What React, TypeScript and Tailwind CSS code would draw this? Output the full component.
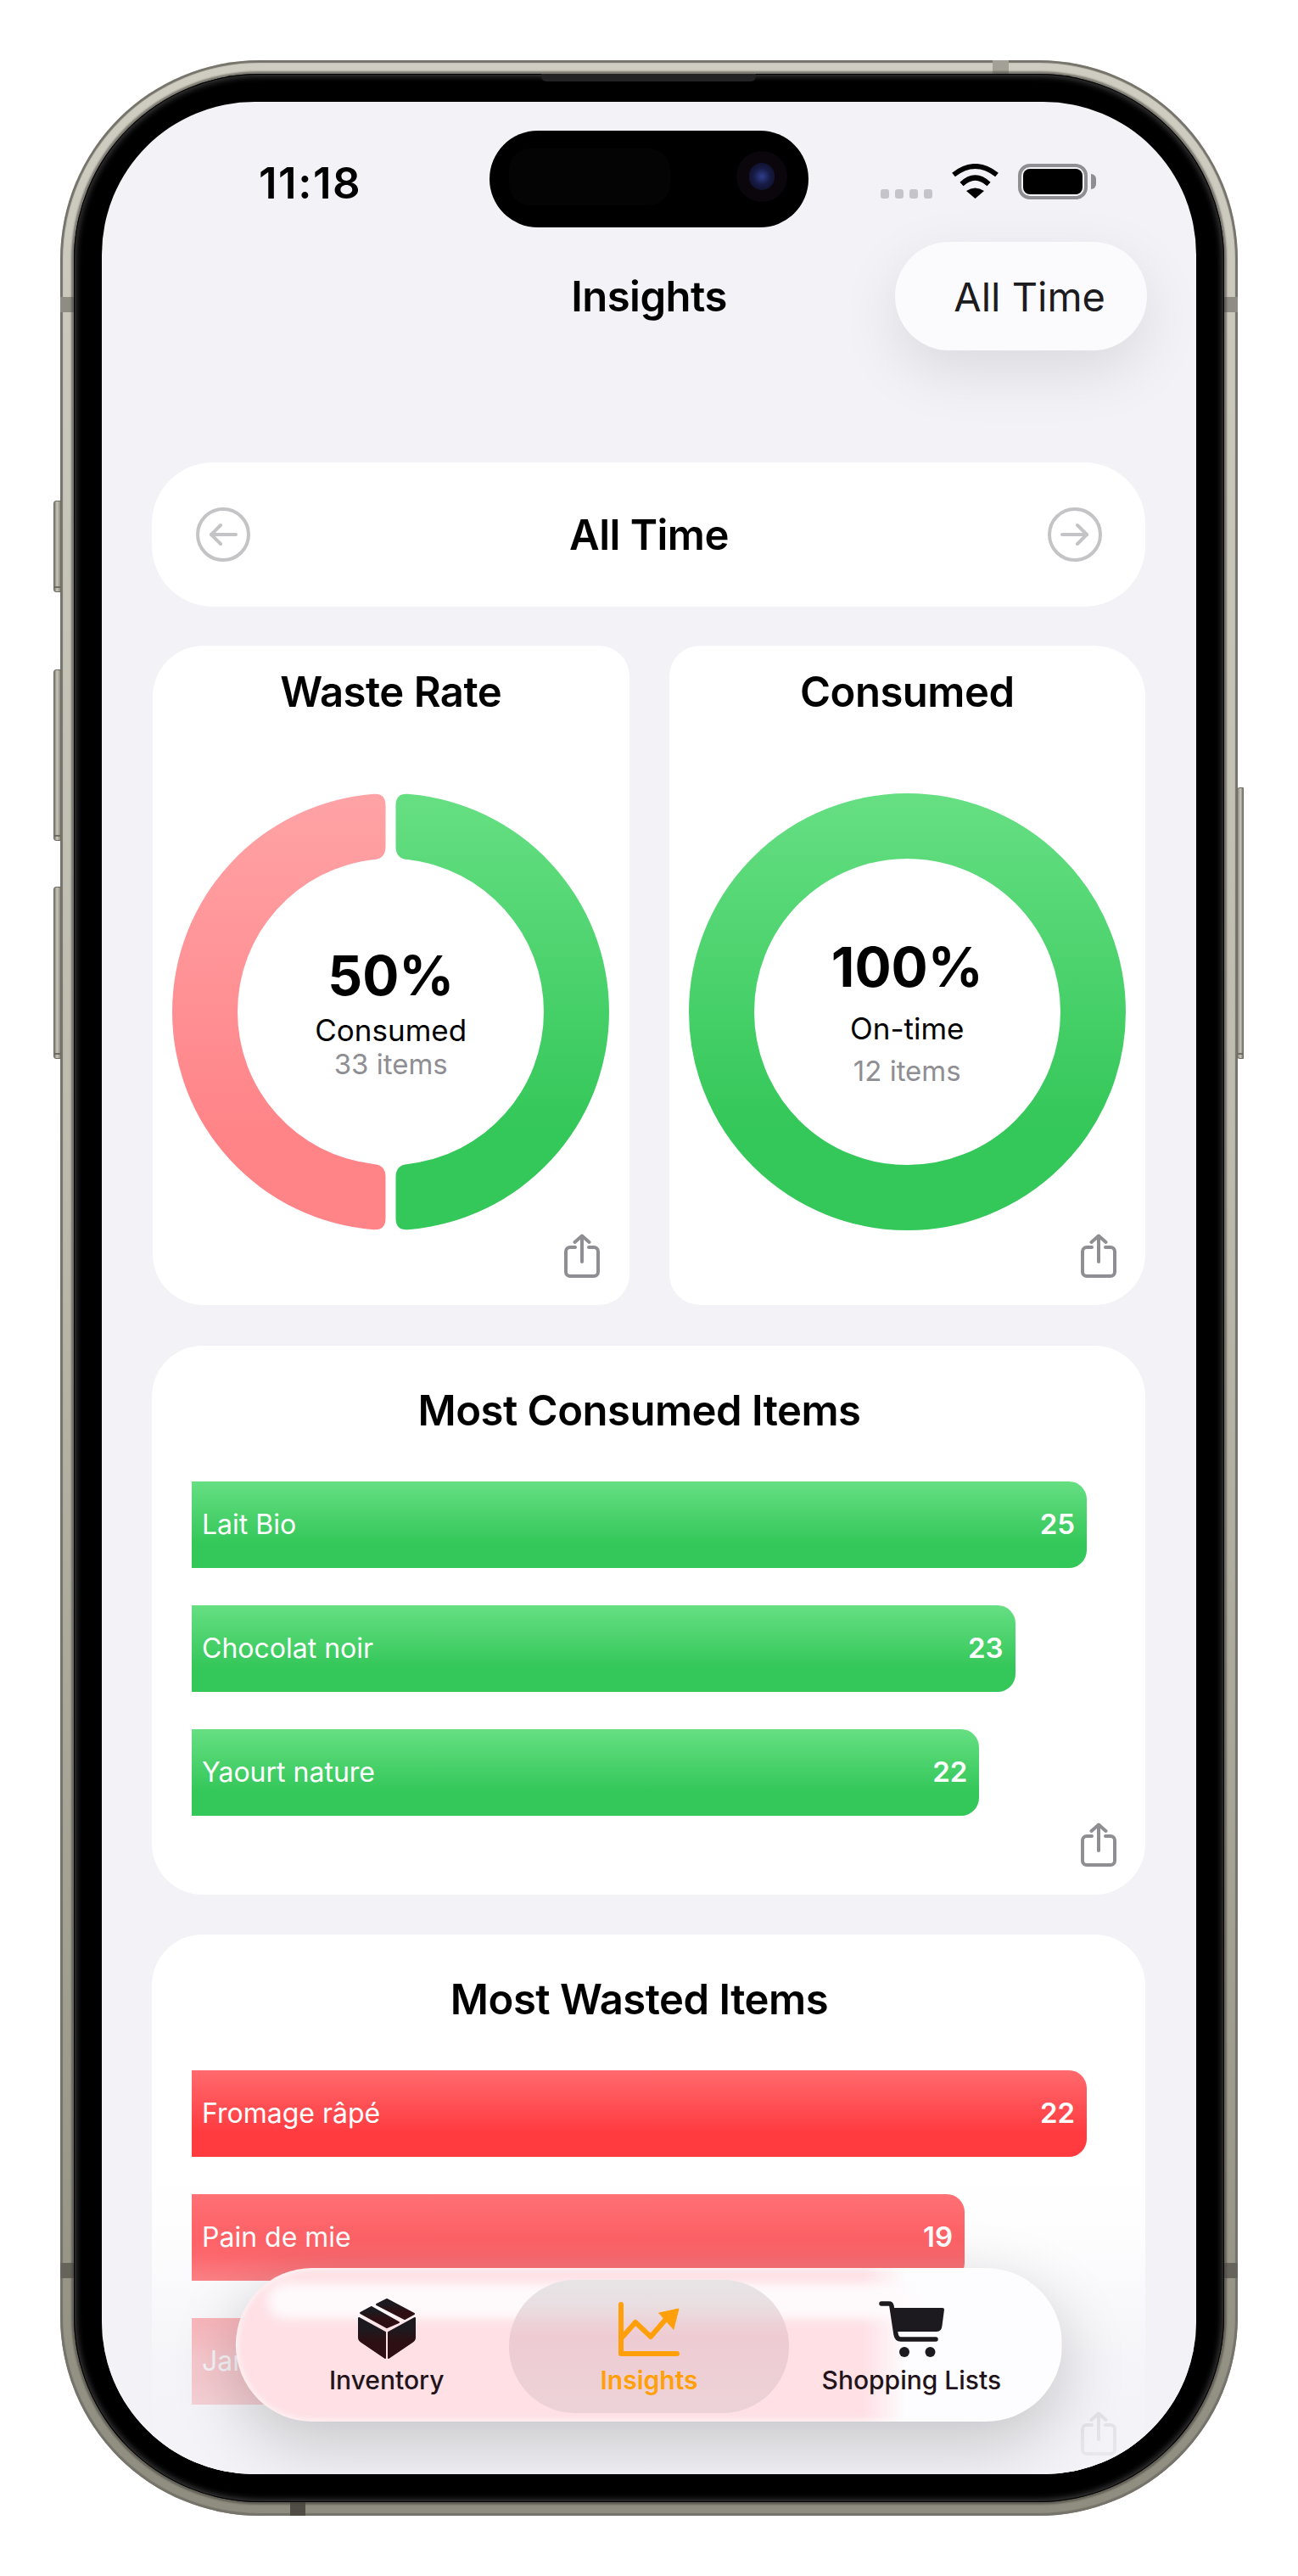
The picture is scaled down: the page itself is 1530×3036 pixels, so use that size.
import { clsx } from "clsx";

type Item = { name: string; value: number; covered?: boolean };

const consumedItems: Item[] = [
  { name: "Lait Bio", value: 25 },
  { name: "Chocolat noir", value: 23 },
  { name: "Yaourt nature", value: 22 },
];

const wastedItems: Item[] = [
  { name: "Fromage râpé", value: 22 },
  { name: "Pain de mie", value: 19 },
  // this row sits under the tab bar, its number can't be seen
  { name: "Jambon", value: 17, covered: true },
];

// right half of the donut, centred on 0,0, with softened corners at the gap
function halfRing(R: number, r: number, gap: number, c: number) {
  const outerY = Math.sqrt(R * R - (gap + c) * (gap + c));
  const innerY = Math.sqrt(r * r - (gap + c) * (gap + c));
  const x = gap + c;
  return [
    `M${gap} ${-R + c}`,
    `Q${gap} ${-R} ${x} ${-outerY}`,
    `A${R} ${R} 0 0 1 ${x} ${outerY}`,
    `Q${gap} ${R} ${gap} ${R - c}`,
    `L${gap} ${r + c}`,
    `Q${gap} ${r} ${x} ${innerY}`,
    `A${r} ${r} 0 0 0 ${x} ${-innerY}`,
    `Q${gap} ${-r} ${gap} ${-r - c}`,
    "Z",
  ].join(" ");
}

function RingDefs() {
  return (
    <defs>
      <linearGradient id="ring-green" gradientUnits="userSpaceOnUse" x1="0" y1="-257" x2="0" y2="140">
        <stop offset="0" stopColor="#66df83" />
        <stop offset="1" stopColor="#34c759" />
      </linearGradient>
      <linearGradient id="ring-red" gradientUnits="userSpaceOnUse" x1="0" y1="-257" x2="0" y2="140">
        <stop offset="0" stopColor="#ffa3a6" />
        <stop offset="1" stopColor="#ff8488" />
      </linearGradient>
    </defs>
  );
}

function SplitRing() {
  const d = halfRing(257.5, 180.5, 6, 14);
  return (
    <svg width="515" height="515" viewBox="-257.5 -257.5 515 515">
      <RingDefs />
      <path d={d} fill="url(#ring-green)" />
      <path d={d} fill="url(#ring-red)" transform="scale(-1 1)" />
    </svg>
  );
}

function FullRing() {
  return (
    <svg width="515" height="515" viewBox="-257.5 -257.5 515 515">
      <RingDefs />
      <circle r="219" fill="none" stroke="url(#ring-green)" strokeWidth="77" />
    </svg>
  );
}

function ShareIcon({ color = "#8e8e93" }: { color?: string }) {
  return (
    <svg width="42" height="52" viewBox="0 0 42 52" fill="none" stroke={color} strokeWidth="4" strokeLinecap="round" strokeLinejoin="round">
      <path d="M13 16H7a5 5 0 0 0-5 5v24a5 5 0 0 0 5 5h28a5 5 0 0 0 5-5V21a5 5 0 0 0-5-5h-6" />
      <path d="M21 3v30" />
      <path d="M12.5 10 21 2.5 29.5 10" />
    </svg>
  );
}

function ArrowCircle({ flip }: { flip?: boolean }) {
  return (
    <svg width="64" height="64" viewBox="0 0 64 64" fill="none" stroke="#c4c4c6" strokeWidth="4" strokeLinecap="round" strokeLinejoin="round" className={clsx(flip && "-scale-x-100")}>
      <circle cx="32" cy="32" r="30" />
      <path d="M47 32H18" />
      <path d="M29 21 18 32l11 11" />
    </svg>
  );
}

function Bar({ item, max, tone }: { item: Item; max: number; tone: "green" | "red" }) {
  return (
    <div
      className={clsx(
        "h-[102px] flex items-center justify-between pl-[12px] pr-[14px] rounded-r-[21px] text-white",
        tone === "green"
          ? "bg-[linear-gradient(180deg,#66df83_0%,#34c759_72%)]"
          : "bg-[linear-gradient(180deg,#ff6a6e_0%,#ff3b40_72%)]"
      )}
      style={{ width: `${(item.value / max) * 100}%` }}>
      <span className="text-[32px]">{item.name}</span>
      {!item.covered && <span className="text-[33px] font-semibold">{item.value}</span>}
    </div>
  );
}

function BarCard({ title, items, tone, className }: { title: string; items: Item[]; tone: "green" | "red"; className?: string }) {
  return (
    <div className={clsx("h-[647px] shrink-0 bg-white rounded-[60px] pt-[51px]", className)}>
      <h2 className="w-[1055px] ml-[47px] text-center text-[49px] leading-[51px] font-semibold text-black tracking-[-0.5px]">{title}</h2>
      <div className="w-[1055px] ml-[47px] mt-[58px] flex flex-col gap-[44px]">
        {items.map((item) => (
          <Bar key={item.name} item={item} max={items[0].value} tone={tone} />
        ))}
      </div>
      <div className="flex justify-end pr-[34px] mt-[8px]">
        <ShareIcon />
      </div>
    </div>
  );
}

function InventoryIcon() {
  return (
    <svg width="68" height="73" viewBox="0 0 68 73">
      <defs>
        <linearGradient id="box-fill" x1="0" y1="0" x2="0" y2="1">
          <stop offset="0.25" stopColor="#1c1a1e" />
          <stop offset="0.6" stopColor="#2e0f14" />
        </linearGradient>
      </defs>
      <g fill="url(#box-fill)" stroke="url(#box-fill)" strokeWidth="2" strokeLinejoin="round">
        <path d="M34 2 66 19 55 25 22 8Z" />
        <path d="M16 11 48 29 34 35 3 18Z" />
        <path d="M1 24 32 41V71L4 52Q1 50 1 47Z" />
        <path d="M67 24 36 41V71L64 52Q67 50 67 47Z" />
      </g>
    </svg>
  );
}

function ChartIcon() {
  return (
    <svg width="72" height="64" viewBox="0 0 72 64" fill="none" stroke="#ff9f0a" strokeWidth="6" strokeLinecap="round" strokeLinejoin="round">
      <path d="M3 3V61H69" />
      <path d="M5 41 20 24 38 41 57 19" />
      <path d="M48 13 71 8 65 32Z" fill="#ff9f0a" strokeWidth="1" />
    </svg>
  );
}

function CartIcon() {
  return (
    <svg width="77" height="66" viewBox="0 0 77 66" fill="none">
      <path d="M3 3H12Q14.5 3 15 6L20 39Q21 45 26 45H67" stroke="#1c1a1e" strokeWidth="5.5" strokeLinecap="round" strokeLinejoin="round" />
      <path d="M17 8H75Q77 8 77 10L74.5 29Q74 36 68 36H21Z" fill="#1c1a1e" />
      <circle cx="30" cy="60" r="6" fill="#1c1a1e" />
      <circle cx="60.5" cy="60" r="6" fill="#1c1a1e" />
    </svg>
  );
}

function TabItem({ label, icon, active }: { label: string; icon: React.ReactNode; active?: boolean }) {
  return (
    <div
      className={clsx(
        "relative h-[157px] flex flex-col items-center pt-[21px]",
        active
          ? "w-[330px] -mx-[10px] rounded-[78px] bg-[linear-gradient(180deg,#e7e4e6_0%,#e9dfe2_18%,#eecbd2_42%,#ecd3d8_100%)]"
          : "w-[310px]"
      )}>
      <div className="h-[73px] flex items-center">{icon}</div>
      <span className={clsx("mt-[9px] text-[30px] leading-[30px]", active ? "font-semibold text-[#ff9f0a]" : "font-medium text-[#22141a]")}>{label}</span>
    </div>
  );
}

function SideButton({ className }: { className: string }) {
  return (
    <div className={clsx("absolute bg-[linear-gradient(90deg,#77756b,#cac7bc_45%,#8f8d83)] border border-[#6e6c63]", className)}>
      <div className="absolute bottom-[4px] inset-x-0 h-[2px] bg-[#6e6c63]" />
    </div>
  );
}

function Antenna({ className }: { className: string }) {
  return <div className={clsx("absolute", className)} />;
}

export default function App() {
  return (
    <div className="w-[1530px] h-[3036px] bg-white pt-[71px] pl-[71px] font-[Inter,sans-serif]">
      {/* titanium frame */}
      <div className="relative w-[1388px] h-[2894px] rounded-[235px] p-[16px] bg-[linear-gradient(180deg,#cfccc1_0%,#bdbaae_45%,#8f8d7f_100%)] shadow-[inset_0_0_1px_3px_#75736a]">
        <SideButton className="left-[-8px] top-[519px] w-[9px] h-[108px] rounded-l-[3px]" />
        <SideButton className="left-[-8px] top-[718px] w-[9px] h-[202px] rounded-l-[3px]" />
        <SideButton className="left-[-8px] top-[974px] w-[9px] h-[203px] rounded-l-[3px]" />
        <SideButton className="right-[-7px] top-[857px] w-[8px] h-[320px] rounded-r-[3px] -scale-x-100" />
        <Antenna className="left-[1099px] top-0 w-[19px] h-[16px] bg-[#a3a197]" />
        <Antenna className="left-0 top-[279px] w-[16px] h-[18px] bg-[#8f8d83]" />
        <Antenna className="right-0 top-[279px] w-[16px] h-[18px] bg-[#8f8d83]" />
        <Antenna className="left-0 top-[2596px] w-[16px] h-[18px] bg-[#65635a]" />
        <Antenna className="right-0 top-[2596px] w-[16px] h-[18px] bg-[#65635a]" />
        <Antenna className="left-[271px] bottom-0 w-[18px] h-[16px] bg-[#4f4d45]" />

        {/* black bezel */}
        <div className="relative w-full h-full rounded-[219px] p-[33px] bg-black shadow-[0_0_2px_3px_rgba(70,68,60,0.6),inset_0_0_0_1px_#000,inset_0_0_7px_3px_#3c3c3e]">
          <div className="absolute left-[551px] top-0 w-[253px] h-[9px] rounded-b-[6px] bg-[#232325]" />

          {/* screen */}
          <div className="relative w-[1290px] h-[2796px] rounded-[180px] overflow-hidden bg-[#f2f2f7]">
            {/* dynamic island */}
            <div className="absolute z-30 left-[457px] top-[34px] w-[376px] h-[114px] rounded-[57px] bg-black">
              <div className="absolute left-[23px] top-[21px] w-[190px] h-[67px] rounded-[25px] bg-[#040404]" />
              <div className="absolute left-[291px] top-[24px] w-[60px] h-[60px] rounded-full bg-[#0a060c] flex items-center justify-center">
                <div className="w-[30px] h-[32px] rounded-full bg-[radial-gradient(circle,#2f3f8f_0%,#171a44_45%,#0b0b1e_100%)]" />
              </div>
            </div>

            {/* status bar */}
            <div className="h-[165px] pt-[70px] pl-[185px] pr-[118px] flex justify-between items-start">
              <span className="text-[51px] leading-[51px] font-semibold text-black tracking-[1.5px]">11:18</span>
              <div className="mt-[3px] flex items-end gap-[22px] h-[42px]">
                <div className="flex gap-[7px] mb-[1px]">
                  <div className="w-[10px] h-[11px] rounded-[3px] bg-[#c4c4ca]" />
                  <div className="w-[10px] h-[11px] rounded-[3px] bg-[#c4c4ca]" />
                  <div className="w-[10px] h-[11px] rounded-[3px] bg-[#c4c4ca]" />
                  <div className="w-[10px] h-[11px] rounded-[3px] bg-[#c4c4ca]" />
                </div>
                <svg width="57" height="41" viewBox="0 0 57 41" fill="none" stroke="#000" strokeWidth="6" className="mb-[1px]">
                  <path d="M3 13Q28.5-7 54 13" />
                  <path d="M12.5 24Q28.5 9 44.5 24" />
                  <path d="M18 32Q28.5 25 39 32L28.5 41Z" fill="#000" stroke="none" />
                </svg>
                <div className="flex items-center gap-[4px]">
                  <div className="w-[82px] h-[42px] rounded-[14px] border-[4px] border-[#8e8e93] p-[2px]">
                    <div className="w-full h-full rounded-[8px] bg-black" />
                  </div>
                  <div className="w-[6px] h-[18px] rounded-r-[6px] bg-[#8e8e93]" />
                </div>
              </div>
            </div>

            {/* nav bar */}
            <div className="h-[128px] grid grid-cols-[1fr_auto_1fr] items-center px-[58px]">
              <div />
              <h1 className="text-[49px] leading-[51px] font-semibold text-black tracking-[-0.5px]">Insights</h1>
              <div className="flex justify-end">
                <div className="w-[297px] h-[128px] rounded-[64px] bg-[#fbfbfe] flex items-center justify-end pr-[49px] text-[47px] leading-[51px] text-[#1c1c1e] shadow-[0_24px_70px_rgba(0,0,0,0.1)]">
                  All Time
                </div>
              </div>
            </div>

            {/* scroll content */}
            <div className="mt-[132px] pl-[59px] pr-[60px] flex flex-col">
              <div className="h-[170px] bg-white rounded-[72px] flex items-center justify-between pl-[52px] pr-[51px]">
                <ArrowCircle />
                <span className="text-[49px] leading-[51px] font-semibold text-black tracking-[-0.5px]">All Time</span>
                <ArrowCircle flip />
              </div>

              <div className="mt-[46px] ml-[1px] grid grid-cols-2 gap-[47px]">
                <div className="h-[777px] bg-white rounded-tl-[60px] rounded-bl-[60px] rounded-tr-[36px] rounded-br-[36px] pt-[29px] flex flex-col items-center">
                  <h2 className="text-[49px] leading-[51px] font-semibold text-black tracking-[-0.5px]">Waste Rate</h2>
                  <div className="relative mt-[94px] w-[515px] h-[515px]">
                    <SplitRing />
                    <div className="absolute inset-0 pt-[183px] flex flex-col items-center">
                      <span className="text-[64px] leading-[64px] font-bold text-black">50%</span>
                      <span className="mt-[14px] text-[35px] leading-[36px] text-black">Consumed</span>
                      <span className="mt-[6px] text-[33px] leading-[33px] text-[#8e8e93]">33 items</span>
                    </div>
                  </div>
                  <div className="self-end pr-[35px] mt-[4px]">
                    <ShareIcon />
                  </div>
                </div>

                <div className="h-[777px] bg-white rounded-tr-[60px] rounded-br-[60px] rounded-tl-[36px] rounded-bl-[36px] pt-[29px] flex flex-col items-center">
                  <h2 className="text-[49px] leading-[51px] font-semibold text-black tracking-[-0.5px]">Consumed</h2>
                  <div className="relative mt-[94px] w-[515px] h-[515px]">
                    <FullRing />
                    <div className="absolute inset-0 pt-[173px] flex flex-col items-center">
                      <span className="text-[64px] leading-[64px] font-bold text-black">100%</span>
                      <span className="mt-[22px] text-[35px] leading-[36px] text-black">On-time</span>
                      <span className="mt-[16px] text-[33px] leading-[33px] text-[#8e8e93]">12 items</span>
                    </div>
                  </div>
                  <div className="self-end pr-[34px] mt-[4px]">
                    <ShareIcon />
                  </div>
                </div>
              </div>

              <BarCard className="mt-[48px]" title="Most Consumed Items" items={consumedItems} tone="green" />
              <BarCard className="mt-[47px]" title="Most Wasted Items" items={wastedItems} tone="red" />
            </div>

            {/* content fades out under the tab bar */}
            <div className="absolute inset-x-0 bottom-0 h-[356px] bg-[linear-gradient(180deg,rgba(242,242,247,0)_0%,rgba(242,242,247,0.15)_22%,rgba(242,242,247,0.35)_34%,rgba(242,242,247,0.75)_62%,rgba(242,242,247,0.92)_100%)]" />

            {/* tab bar */}
            <div className="absolute left-[158px] bottom-[62px] w-[974px] h-[181px] rounded-[90px] pt-[13px] px-[22px] flex items-start border border-white/40 bg-[#fdfcfe] bg-[linear-gradient(90deg,#fee0e5_0%,#fee0e5_76%,rgba(254,224,229,0)_81%)] shadow-[0_24px_80px_rgba(0,0,0,0.2),inset_0_0_8px_rgba(255,255,255,0.9)]">
              <div className="absolute left-[36px] top-[17px] w-[760px] h-[42px] rounded-[30px] bg-[#fefafc] blur-[7px]" />
              <TabItem label="Inventory" icon={<InventoryIcon />} />
              <TabItem label="Insights" icon={<ChartIcon />} active />
              <TabItem label="Shopping Lists" icon={<CartIcon />} />
            </div>
          </div>
        </div>
      </div>
    </div>
  );
}
